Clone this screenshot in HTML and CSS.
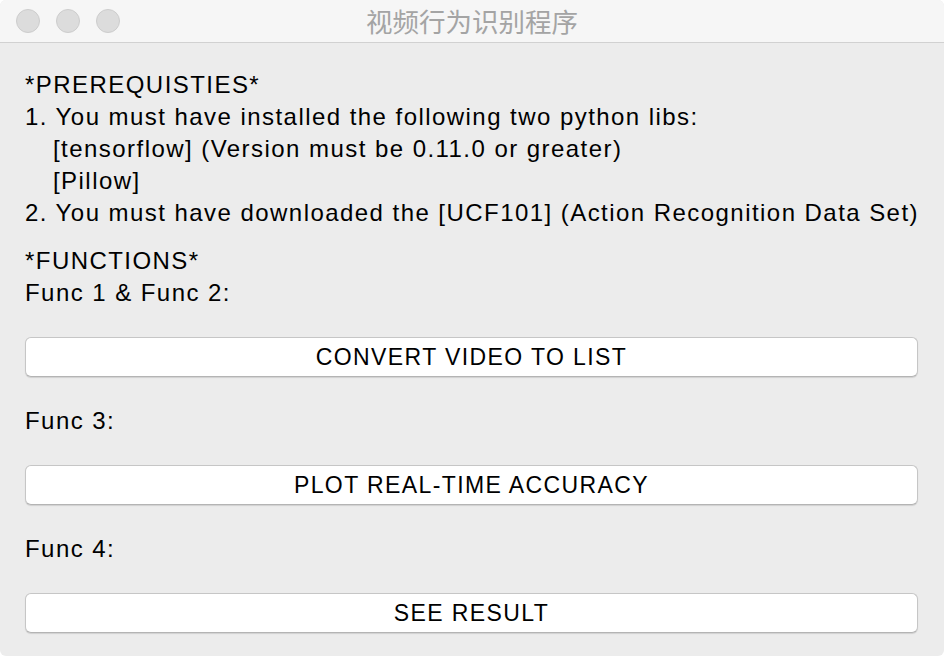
FILE: index.html
```html
<!DOCTYPE html>
<html>
<head>
<meta charset="utf-8">
<link rel="stylesheet" href="styles.css">
</head>
<body>
<div class="window">
  <div class="titlebar">
    <div class="lights">
      <span class="light"></span>
      <span class="light"></span>
      <span class="light"></span>
    </div>
    <div class="title">视频行为识别程序</div>
  </div>
  <div class="content">
    <div class="section">
      <div class="line">*PREREQUISTIES*</div>
      <div class="line">1. You must have installed the following two python libs:</div>
      <div class="line indent">[tensorflow] (Version must be 0.11.0 or greater)</div>
      <div class="line indent">[Pillow]</div>
      <div class="line">2. You must have downloaded the [UCF101] (Action Recognition Data Set)</div>
    </div>
    <div class="section second">
      <div class="line">*FUNCTIONS*</div>
      <div class="line">Func 1 &amp; Func 2:</div>
      <button class="btn">CONVERT VIDEO TO LIST</button>
      <div class="line">Func 3:</div>
      <button class="btn">PLOT REAL-TIME ACCURACY</button>
      <div class="line">Func 4:</div>
      <button class="btn">SEE RESULT</button>
    </div>
  </div>
</div>
</body>
</html>
```

FILE: styles.css
```css
html, body {
  margin: 0;
  padding: 0;
  background: #ffffff;
}
.window {
  width: 944px;
  height: 656px;
  background: #ececec;
  border-radius: 6px;
  overflow: hidden;
  box-sizing: border-box;
  display: flex;
  flex-direction: column;
  font-family: "Liberation Sans", Arial, sans-serif;
  color: #000;
}
.titlebar {
  height: 42px;
  flex: none;
  background: #f6f6f6;
  border-bottom: 1px solid #d1d1d1;
  display: flex;
  align-items: center;
  position: relative;
}
.lights {
  display: flex;
  gap: 16px;
  padding-left: 16px;
}
.light {
  width: 22px;
  height: 22px;
  border-radius: 50%;
  background: #dcdcdc;
  border: 1px solid #cdcdcd;
}
.title {
  position: absolute;
  left: 0;
  right: 0;
  top: 0;
  height: 42px;
  line-height: 42px;
  text-align: center;
  font-family: "Noto Sans CJK SC", sans-serif;
  font-size: 26.5px;
  color: #a4a4a4;
}
.content {
  padding: 26px 25px 0 25px;
  display: flex;
  flex-direction: column;
}
.section {
  display: flex;
  flex-direction: column;
}
.second {
  margin-top: 16px;
}
.line {
  font-size: 24px;
  line-height: 32px;
  height: 32px;
  letter-spacing: 1.45px;
  white-space: nowrap;
}
.indent {
  padding-left: 28px;
}
.btn {
  margin: 28px 0;
  height: 40px;
  width: 893px;
  box-sizing: border-box;
  background: #ffffff;
  border: 1px solid #c6c6c6;
  border-bottom-color: #b4b4b4;
  border-radius: 6px;
  box-shadow: 0 1px 1px rgba(0,0,0,0.12);
  font-family: "Liberation Sans", Arial, sans-serif;
  font-size: 23px;
  letter-spacing: 1.4px;
  color: #000;
  padding: 0;
}
```
